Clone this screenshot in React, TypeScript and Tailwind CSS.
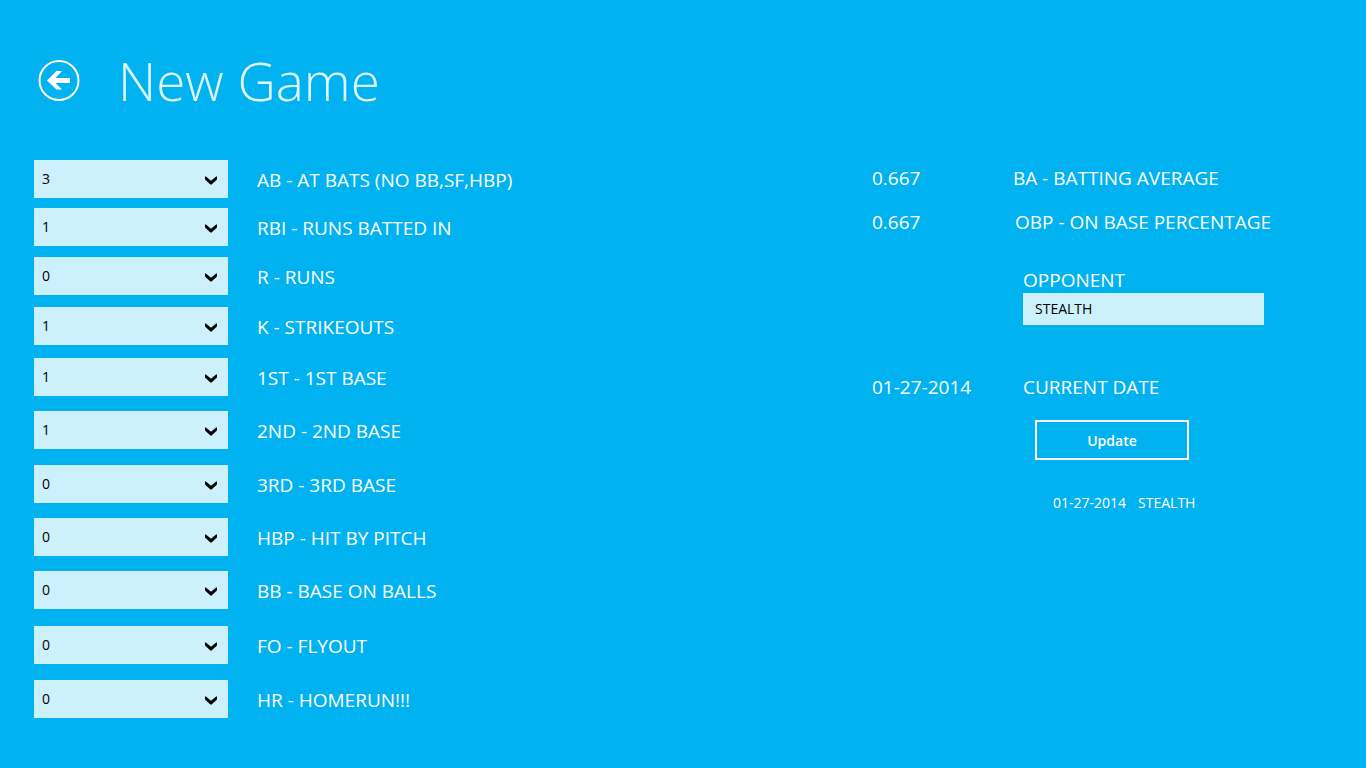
import { useState } from "react";
import clsx from "clsx";

type Stat = {
  id: string;
  label: string;
  value: number;
  className?: string;
};

const STATS: Stat[] = [
  { id: "ab", label: "AB - AT BATS (NO BB,SF,HBP)", value: 3 },
  { id: "rbi", label: "RBI - RUNS BATTED IN", value: 1, className: "mt-2.5" },
  { id: "r", label: "R - RUNS", value: 0, className: "mt-[11px]" },
  { id: "k", label: "K - STRIKEOUTS", value: 1, className: "mt-3" },
  { id: "1st", label: "1ST - 1ST BASE", value: 1, className: "mt-[13px]" },
  { id: "2nd", label: "2ND - 2ND BASE", value: 1, className: "mt-[15px]" },
  { id: "3rd", label: "3RD - 3RD BASE", value: 0, className: "mt-4" },
  { id: "hbp", label: "HBP - HIT BY PITCH", value: 0, className: "mt-[15px]" },
  { id: "bb", label: "BB - BASE ON BALLS", value: 0, className: "mt-[15px]" },
  { id: "fo", label: "FO - FLYOUT", value: 0, className: "mt-[17px]" },
  { id: "hr", label: "HR - HOMERUN!!!", value: 0, className: "mt-4" },
];

const OPTIONS = Array.from({ length: 11 }, (_, i) => i);

const BackIcon = () => (
  <svg width="42" height="42" viewBox="0 0 42 42" aria-hidden="true">
    <circle cx="21" cy="21.5" r="19.5" fill="none" stroke="#fff" strokeWidth="2" />
    <path
      d="M9 21.5 L18.5 12 H24 L17.5 19 H32 V24 H17.5 L24 30.5 H18.5 Z"
      fill="#fff"
    />
  </svg>
);

const ChevronIcon = () => (
  <svg
    width="12"
    height="9"
    viewBox="0 0 12 9"
    aria-hidden="true"
    className="pointer-events-none absolute right-[11px] top-4"
  >
    <path
      d="M0 0.3 L1.5 1 L6 4.8 L10.5 1 L12 0.3 V3.6 L6.6 8.5 H5.4 L0 3.6 Z"
      fill="#000"
    />
  </svg>
);

const StatRow = ({ id, label, value, className }: Stat) => {
  const [selected, setSelected] = useState(value);

  return (
    <div className={clsx("flex items-center", className)}>
      <div className="relative w-[194px]">
        <select
          id={id}
          value={selected}
          onChange={(e) => setSelected(Number(e.target.value))}
          className="block h-[38px] w-full appearance-none bg-[#ccf0fc] px-2 text-sm text-black outline-none"
        >
          {OPTIONS.map((option) => (
            <option key={option} value={option}>
              {option}
            </option>
          ))}
        </select>
        <ChevronIcon />
      </div>
      <label htmlFor={id} className="ml-[29px] pt-0.5 text-[19px] leading-6">
        {label}
      </label>
    </div>
  );
};

const App = () => {
  const [opponent, setOpponent] = useState("STEALTH");

  return (
    <main className="min-h-screen bg-[#00b2f0] pb-12 pl-[34px] pr-[92px] pt-10 font-['Open_Sans','Noto_Sans',sans-serif] text-white">
      <header className="flex h-20 items-center pl-1">
        <button type="button" aria-label="Back" className="cursor-pointer">
          <BackIcon />
        </button>
        <h1 className="ml-[38px] text-[53px] font-light leading-none text-[#dff5fd]">
          New Game
        </h1>
      </header>

      <div className="mt-10 flex justify-between">
        <form>
          {STATS.map((stat) => (
            <StatRow key={stat.id} {...stat} />
          ))}
        </form>

        <section className="w-[402px] whitespace-nowrap pt-1.5 text-[19px] leading-6">
          <div className="flex">
            <span className="w-[141px]">0.667</span>
            <span>BA - BATTING AVERAGE</span>
          </div>
          <div className="mt-5 flex">
            <span className="w-[143px]">0.667</span>
            <span>OBP - ON BASE PERCENTAGE</span>
          </div>

          <div className="ml-[151px] mt-[34px]">
            <label htmlFor="opponent" className="block">
              OPPONENT
            </label>
            <input
              id="opponent"
              type="text"
              value={opponent}
              onChange={(e) => setOpponent(e.target.value)}
              className="mt-px block h-8 w-[241px] bg-[#ccf0fc] px-3 pb-0.5 text-sm text-black outline-none"
            />
          </div>

          <div className="mt-[50px] flex">
            <span className="w-[151px]">01-27-2014</span>
            <span>CURRENT DATE</span>
          </div>

          <button
            type="button"
            className="ml-[163px] mt-[21px] block h-10 w-[154px] cursor-pointer border-2 border-white pt-0.5 text-sm font-semibold"
          >
            Update
          </button>

          <p className="ml-[181px] mt-[33px] flex gap-3 text-sm">
            <span>01-27-2014</span>
            <span>STEALTH</span>
          </p>
        </section>
      </div>
    </main>
  );
};

export default App;
